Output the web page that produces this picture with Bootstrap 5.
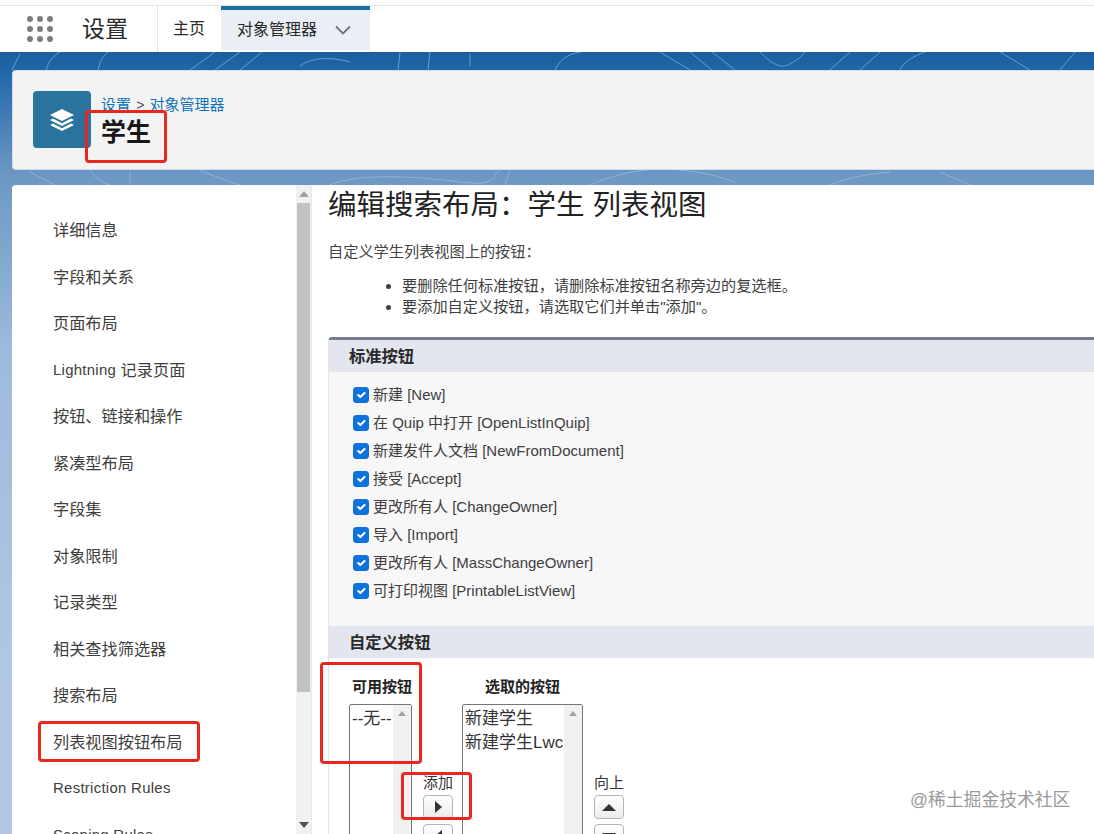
<!DOCTYPE html>
<html lang="zh">
<head>
<meta charset="utf-8">
<title>设置</title>
<link href="https://cdn.jsdelivr.net/npm/bootstrap@5.3.0/dist/css/bootstrap.min.css" rel="stylesheet">
<style>
html,body{height:834px;overflow:hidden}
body{font-family:"Liberation Sans","Noto Sans CJK SC",sans-serif;color:#1f1f1f;background:#fff;position:relative}
.top-bar{border-top:1px solid #e6e6e6;margin-top:5px;background:#fff;height:47px}
.launcher{width:82px;padding-left:26px}
.app-name{font-size:23px;width:75px;color:#2b2b2b}
.home-tab{width:64px;font-size:16px;border-left:1px solid #e4e4e4;color:#2b2b2b;padding-left:15px}
.obj-tab{width:149px;height:44px;background:#e9eff4;border-top:4px solid #1b6c9f;font-size:16px;padding:0 19px 0 16px;color:#2b2b2b}
.stage{height:782px;position:relative;background:linear-gradient(#1a5f9f 0,#2067a8 18px,#6c97c4 122px,#9dbbdc 300px,#b0c8e4 640px);padding:18px 0 0 12px}
.contours{position:absolute;left:0;top:0;width:1094px;height:134px}
.hdr-card{position:relative;height:100px;background:#f3f3f3;border:1px solid #d6dbe2;border-right:0;border-radius:4px 0 0 4px;padding:20px 0 0 20px}
.hdr-icon{width:58px;height:57px;background:#2a739f;border-radius:4px}
.crumbs{font-size:15px;line-height:18px;color:#555;margin-top:5px;padding-left:10px}
.crumbs a{color:#0f74b8;text-decoration:none}
.crumb-sep{margin:0 1px;font-size:14px}
.hdr-title{font-size:25px;font-weight:700;line-height:34px;margin:1px 0 0;padding-left:10px;color:#181818}
.work{position:relative;margin-top:15px;height:649px}
.side-wrap{width:300px;background:#fff;border-radius:4px 0 0 0}
.side-list{padding:22px 0 0 41px;width:284px}
.side-item{height:46.5px;font-size:16.2px;color:#3e3e3c;display:flex;align-items:center;white-space:pre}
.lat-txt{font-size:14.9px;letter-spacing:.3px}
.fake-bar{width:16px;background:#f1f1f1;border-right:1px solid #e9e9e9}
.fake-thumb{height:489px;background:#c1c1c1;margin:0 1px}
.arrow-box{height:18px}
.content-pane{background:#fff;padding:0 0 0 16px;min-width:0}
.page-h{font-size:28.5px;font-weight:400;line-height:40px;margin:0;color:#222;white-space:nowrap}
.intro{font-size:15.2px;line-height:20px;margin:17px 0 0;color:#444}
.hints{font-size:15.2px;line-height:20.5px;margin:14px 0 0;padding-left:74px;color:#3e3e3e}
.std-box{margin-top:20px;border-top:3px solid #767d92;border-radius:4px 0 0 0;background:#f7f7f8;border-left:1px solid #e4e4e4}
.sec-head{height:32px;background:#e3e6ef;font-size:16.3px;font-weight:700;padding-left:20px;color:#2a2a2a;display:flex;align-items:center}
.std-body{padding:9px 0 22px 24px;height:254px}
.chk-row{height:28px;font-size:15px;color:#3e3e3e;gap:4px}
.chk-row .form-check-input{width:16px;height:16px;margin:0;border-radius:3px;background-color:#0c72de;border-color:#0c72de;flex:none;opacity:1}
.cust-body{padding:19px 0 0 20px;background:#fff}
.col-label{font-size:15px;font-weight:700;text-align:center;line-height:20px;color:#222;white-space:nowrap}
.avail-col{width:63px}
.avail-col .col-label{padding-left:3px}
.picked-col{width:121px}
.lbox{margin-top:7px;height:200px;border:1px solid #777;border-radius:2px 2px 0 0;font-size:17px;line-height:24px;color:#333;background:#fff}
.lbox-text{padding:2px 0 0 2px;white-space:nowrap}
.lbox-bar{width:18px;background:#f1f1f1;padding-top:6px}
.lbox-bar svg{display:block;margin:0 auto}
.move-col{width:30px;font-size:15px;text-align:center;color:#333;line-height:18px}
.add-col{margin:97px 9px 0 11px}
.up-col{margin:97px 0 0 11px}
.move-btn{width:30px;height:24px;background:linear-gradient(#fff,#ececec);border:1px solid #b5b5b5;border-radius:4px;padding:0;margin-top:3px;display:flex;align-items:center;justify-content:center}
.move-btn+.move-btn{margin-top:5px}
.mark-box{position:absolute;border:3px solid #e8281e;border-radius:4px;pointer-events:none}
.mark-title{left:85px;top:110px;width:82px;height:53px}
.mark-side{left:38px;top:721px;width:162px;height:41px}
.mark-avail{left:320px;top:662px;width:102px;height:102px}
.mark-add{left:401px;top:772px;width:71px;height:48px}
.wmark{position:absolute;left:910px;top:788px;font-size:17.8px;line-height:24px;color:#9a9a9a;white-space:nowrap}
</style>
</head>
<body>
<div class="top-bar d-flex align-items-center">
  <div class="launcher d-flex">
    <svg width="28" height="28" viewBox="0 0 28 28" fill="#7d7d7d" aria-hidden="true"><circle cx="4" cy="4" r="3"/><circle cx="14" cy="4" r="3"/><circle cx="24" cy="4" r="3"/><circle cx="4" cy="14" r="3"/><circle cx="14" cy="14" r="3"/><circle cx="24" cy="14" r="3"/><circle cx="4" cy="24" r="3"/><circle cx="14" cy="24" r="3"/><circle cx="24" cy="24" r="3"/></svg>
  </div>
  <div class="app-name">设置</div>
  <div class="home-tab h-100 d-flex align-items-center">主页</div>
  <div class="obj-tab d-flex align-items-center justify-content-between align-self-start">
    <span>对象管理器</span>
    <svg width="16" height="10" viewBox="0 0 16 10" fill="none" stroke="#6f7378" stroke-width="1.8" aria-hidden="true"><path d="M1 1.5 8 8.5 15 1.5"/></svg>
  </div>
</div>
<div class="stage">
  <svg class="contours" viewBox="0 0 1094 134" fill="none" stroke="#a9cae6" stroke-opacity=".55" stroke-width="1" aria-hidden="true">
    <path d="M20 2 12 18M60 0C50 6 48 12 46 18M108 0C100 6 100 12 98 18M190 18 215 0M215 18 240 0M240 18 262 0M400 0 398 18M430 0 428 18M555 18C560 6 570 2 580 0M660 0 690 18M690 0 712 18M712 0 735 18M760 0C770 10 780 18 790 12S800 6 805 0M830 18 850 0M860 18 880 0M900 18C905 8 915 4 925 0M1000 0 1030 18M1060 18 1075 0"/>
    <path d="M300 14C310 6 330 4 350 10M470 2V14M30 120 55 133M90 118C95 125 100 130 110 133M130 120V132M200 118C215 125 225 128 240 133M330 133C360 120 420 125 460 130S490 124 500 118M510 118 505 133M590 133C620 120 650 115 680 118S720 125 735 130M830 133C850 125 870 122 890 120M940 120 970 133"/>
  </svg>
  <div class="hdr-card d-flex">
    <div class="hdr-icon d-flex align-items-center justify-content-center flex-shrink-0">
      <svg width="26" height="26" viewBox="0 0 26 26" fill="#fff" aria-hidden="true"><path d="M13 2 25 8 13 14 1 8Z"/><path d="M4 11.6 13 16.2 22 11.6 25 13 13 19 1 13Z"/><path d="M4 16.6 13 21.2 22 16.6 25 18 13 24 1 18Z"/></svg>
    </div>
    <div>
      <div class="crumbs"><a href="#">设置</a> <span class="crumb-sep">&gt;</span> <a href="#">对象管理器</a></div>
      <h1 class="hdr-title">学生</h1>
    </div>
  </div>
  <div class="work d-flex">
    <div class="side-wrap d-flex flex-shrink-0">
      <div class="side-list flex-grow-1 overflow-hidden">
        <div class="side-item">详细信息</div>
        <div class="side-item">字段和关系</div>
        <div class="side-item">页面布局</div>
        <div class="side-item"><span class="lat-txt">Lightning </span>记录页面</div>
        <div class="side-item">按钮、链接和操作</div>
        <div class="side-item">紧凑型布局</div>
        <div class="side-item">字段集</div>
        <div class="side-item">对象限制</div>
        <div class="side-item">记录类型</div>
        <div class="side-item">相关查找筛选器</div>
        <div class="side-item">搜索布局</div>
        <div class="side-item">列表视图按钮布局</div>
        <div class="side-item"><span class="lat-txt">Restriction Rules</span></div>
        <div class="side-item"><span class="lat-txt">Scoping Rules</span></div>
      </div>
      <div class="fake-bar d-flex flex-column flex-shrink-0">
        <div class="arrow-box d-flex align-items-center justify-content-center"><svg width="10" height="6" viewBox="0 0 10 6" fill="#a3a3a3" aria-hidden="true"><path d="M5 0 10 6H0Z"/></svg></div>
        <div class="fake-thumb"></div>
        <div class="flex-grow-1"></div>
        <div class="arrow-box d-flex align-items-center justify-content-center"><svg width="10" height="6" viewBox="0 0 10 6" fill="#505050" aria-hidden="true"><path d="M0 0H10L5 6Z"/></svg></div>
      </div>
    </div>
    <div class="content-pane flex-grow-1">
      <h2 class="page-h">编辑搜索布局：学生 列表视图</h2>
      <p class="intro">自定义学生列表视图上的按钮：</p>
      <ul class="hints">
        <li>要删除任何标准按钮，请删除标准按钮名称旁边的复选框。</li>
        <li>要添加自定义按钮，请选取它们并单击"添加"。</li>
      </ul>
      <div class="std-box">
        <div class="sec-head">标准按钮</div>
        <div class="std-body">
          <div class="chk-row d-flex align-items-center"><input class="form-check-input" type="checkbox" checked disabled><span>新建 [New]</span></div>
          <div class="chk-row d-flex align-items-center"><input class="form-check-input" type="checkbox" checked disabled><span>在 Quip 中打开 [OpenListInQuip]</span></div>
          <div class="chk-row d-flex align-items-center"><input class="form-check-input" type="checkbox" checked disabled><span>新建发件人文档 [NewFromDocument]</span></div>
          <div class="chk-row d-flex align-items-center"><input class="form-check-input" type="checkbox" checked disabled><span>接受 [Accept]</span></div>
          <div class="chk-row d-flex align-items-center"><input class="form-check-input" type="checkbox" checked disabled><span>更改所有人 [ChangeOwner]</span></div>
          <div class="chk-row d-flex align-items-center"><input class="form-check-input" type="checkbox" checked disabled><span>导入 [Import]</span></div>
          <div class="chk-row d-flex align-items-center"><input class="form-check-input" type="checkbox" checked disabled><span>更改所有人 [MassChangeOwner]</span></div>
          <div class="chk-row d-flex align-items-center"><input class="form-check-input" type="checkbox" checked disabled><span>可打印视图 [PrintableListView]</span></div>
        </div>
        <div class="sec-head">自定义按钮</div>
        <div class="cust-body d-flex align-items-start">
          <div class="avail-col">
            <div class="col-label">可用按钮</div>
            <div class="lbox d-flex"><div class="lbox-text flex-grow-1">--无--</div><div class="lbox-bar"><svg width="8" height="5" viewBox="0 0 10 6" fill="#a3a3a3" aria-hidden="true"><path d="M5 0 10 6H0Z"/></svg></div></div>
          </div>
          <div class="move-col add-col">
            <div>添加</div>
            <button class="move-btn" type="button" aria-label="添加"><svg width="7" height="12" viewBox="0 0 7 12" fill="#333" aria-hidden="true"><path d="M0 0 7 6 0 12Z"/></svg></button>
            <button class="move-btn" type="button" aria-label="删除"><svg width="7" height="12" viewBox="0 0 7 12" fill="#333" aria-hidden="true"><path d="M7 0 0 6 7 12Z"/></svg></button>
          </div>
          <div class="picked-col">
            <div class="col-label">选取的按钮</div>
            <div class="lbox d-flex"><div class="lbox-text flex-grow-1">新建学生<br>新建学生Lwc</div><div class="lbox-bar"><svg width="8" height="5" viewBox="0 0 10 6" fill="#a3a3a3" aria-hidden="true"><path d="M5 0 10 6H0Z"/></svg></div></div>
          </div>
          <div class="move-col up-col">
            <div>向上</div>
            <button class="move-btn" type="button" aria-label="向上"><svg width="14" height="7" viewBox="0 0 14 7" fill="#333" aria-hidden="true"><path d="M7 0 14 7H0Z"/></svg></button>
            <button class="move-btn" type="button" aria-label="向下"><svg width="14" height="7" viewBox="0 0 14 7" fill="#333" aria-hidden="true"><path d="M0 0H14L7 7Z"/></svg></button>
          </div>
        </div>
      </div>
    </div>
  </div>
</div>
<div class="mark-box mark-title"></div>
<div class="mark-box mark-side"></div>
<div class="mark-box mark-avail"></div>
<div class="mark-box mark-add"></div>
<div class="wmark">@稀土掘金技术社区</div>
<script src="https://cdn.jsdelivr.net/npm/bootstrap@5.3.0/dist/js/bootstrap.bundle.min.js"></script>
</body>
</html>
